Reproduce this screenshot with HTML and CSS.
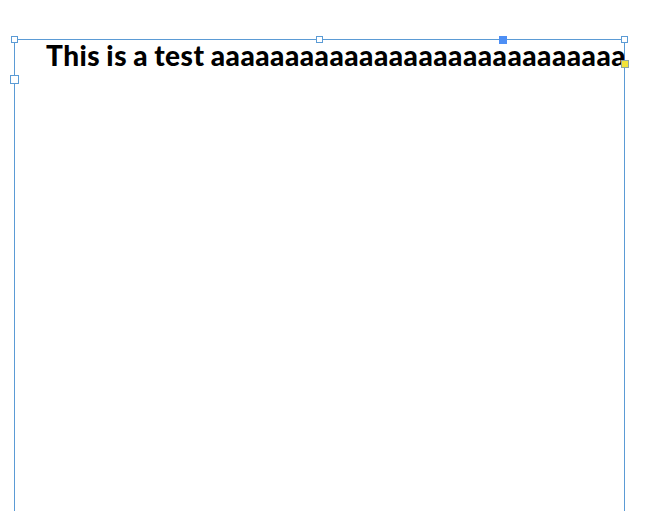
FILE: index.html
```html
<!DOCTYPE html>
<html>
<head>
<meta charset="utf-8">
<link rel="stylesheet" href="styles.css">
</head>
<body>
<div class="frame">
  <div class="text">This is a test aaaaaaaaaaaaaaaaaaaaaaaaaaaa</div>
  <span class="handle h-tl"></span>
  <span class="handle h-tm"></span>
  <span class="handle h-tr"></span>
  <span class="handle filled h-blue"></span>
  <span class="handle big h-left"></span>
  <span class="handle yellow h-yellow"></span>
</div>
</body>
</html>
```
FILE: styles.css
```css
html, body {
  margin: 0;
  padding: 0;
  background: #ffffff;
  overflow: hidden;
}
.frame {
  position: relative;
  margin: 39px 0 0 14px;
  width: 609px;
  height: 472px;
  border: 1px solid #5b9bd5;
  border-bottom: none;
  box-sizing: content-box;
}
.text {
  padding: 0 0 0 31px;
  margin-top: -3px;
  font-family: "Lato", "Open Sans", sans-serif;
  font-weight: 900;
  font-size: 28px;
  letter-spacing: 0.5px;
  word-spacing: -1px;
  line-height: 36px;
  color: #000000;
  white-space: nowrap;
}
.handle {
  position: absolute;
  box-sizing: border-box;
  width: 7px;
  height: 7px;
  background: #ffffff;
  border: 1px solid #5b9bd5;
}
.h-tl { left: -4px; top: -4px; }
.h-tm { left: 301px; top: -4px; }
.h-tr { left: 606px; top: -4px; }
.filled {
  width: 8px;
  height: 8px;
  background: #4d8ff5;
  border-color: #4d8ff5;
}
.h-blue { left: 484px; top: -4px; }
.big {
  width: 9px;
  height: 9px;
}
.h-left { left: -5px; top: 35px; }
.yellow {
  width: 8px;
  height: 8px;
  background: #f3e33a;
  border-color: #8fa6a0;
}
.h-yellow { left: 606px; top: 20px; }
```
